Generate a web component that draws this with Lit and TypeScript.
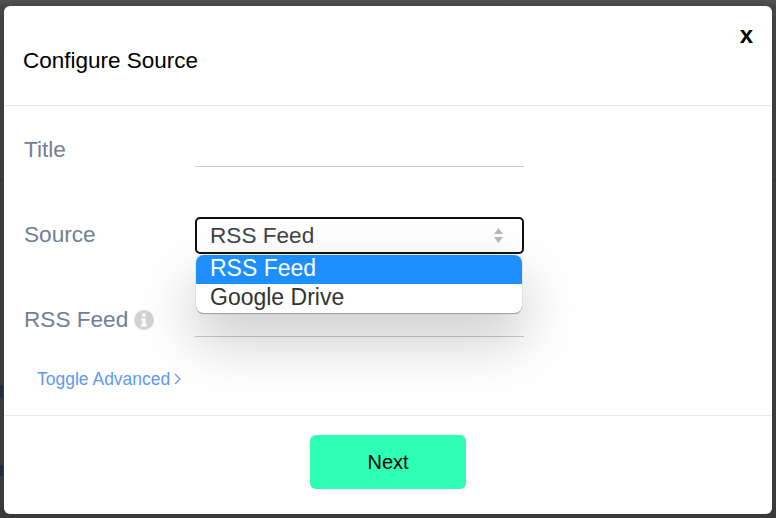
import { LitElement, html, css } from "lit";
import { customElement } from "lit/decorators.js";

@customElement("app-root")
export class AppRoot extends LitElement {
  static styles = css`
    :host {
      display: block;
      position: relative;
      width: 776px;
      height: 518px;
      overflow: hidden;
      background: linear-gradient(#505050 0, #454545 8px, #3e3e3e 60px, #3a3a3a 100%);
      font-family: "Liberation Sans", Arial, sans-serif;
      box-sizing: border-box;
      padding: 6px 4px 4px;
    }
    .smudge {
      position: absolute;
      left: 0;
      width: 3px;
      background: #232d3e;
    }
    .smudge.a {
      top: 385px;
      height: 13px;
    }
    .smudge.b {
      top: 465px;
      height: 11px;
    }
    .rule {
      position: absolute;
      left: 0;
      right: 0;
      top: 179px;
      height: 1px;
      background: #333;
    }
    .modal {
      position: relative;
      height: 508px;
      background: #fff;
      border-radius: 6px;
      display: flex;
      flex-direction: column;
      overflow: hidden;
    }
    .head {
      height: 100px;
      box-sizing: border-box;
      padding: 42px 19px 0;
      border-bottom: 1px solid #e6e6e6;
      font-size: 22.5px;
      line-height: 26px;
      color: #000;
    }
    .close {
      position: absolute;
      top: 16px;
      right: 19px;
      font-size: 24px;
      line-height: 26px;
      font-weight: 700;
      color: #000;
    }
    .body {
      height: 310px;
      box-sizing: border-box;
      border-bottom: 1px solid #e6e6e6;
      padding: 0 20px;
      display: flex;
      flex-direction: column;
    }
    .row {
      display: grid;
      grid-template-columns: 171px 329px;
      height: 85px;
    }
    .label {
      font-size: 22.6px;
      line-height: 26px;
      color: #718096;
      padding-top: 31px;
      display: flex;
      align-items: flex-start;
      gap: 6px;
    }
    .info {
      width: 20px;
      height: 20px;
      margin-top: 3px;
    }
    .line {
      height: 61px;
      box-sizing: border-box;
      border-bottom: 1px solid #ccc;
    }
    .select-wrap {
      position: relative;
      padding-top: 26px;
    }
    .select {
      height: 37px;
      box-sizing: border-box;
      border: 2px solid #101010;
      border-radius: 5px;
      background: #fff;
      display: flex;
      align-items: center;
      justify-content: space-between;
      padding: 0 19px 0 13px;
      font-size: 22.6px;
      color: #444;
    }
    .menu {
      position: absolute;
      z-index: 2;
      left: 1px;
      right: 2px;
      top: 64px;
      background: #fff;
      border-radius: 8px;
      overflow: hidden;
      border-bottom: 1px solid #a6a6a6;
      box-shadow: 0 0 1px rgba(0, 0, 0, 0.45), 0 25px 55px 3px rgba(0, 0, 0, 0.2);
    }
    .option {
      height: 29px;
      line-height: 27px;
      padding-left: 14px;
      font-size: 23px;
      color: #333;
    }
    .option.on {
      background: #1e8fff;
      color: #fff;
    }
    .toggle {
      display: flex;
      align-items: center;
      gap: 4px;
      margin: 7px 0 0 13px;
      font-size: 17.5px;
      line-height: 22px;
      color: #5f97f5;
    }
    .foot {
      flex: 1;
      display: flex;
      justify-content: center;
      padding-top: 19px;
    }
    .next {
      width: 156px;
      height: 54px;
      border-radius: 6px;
      background: #2fffb5;
      display: flex;
      align-items: center;
      justify-content: center;
      font-size: 20px;
      color: #000;
    }
  `;

  render() {
    return html`
      <div class="rule"></div>
      <div class="smudge a"></div>
      <div class="smudge b"></div>
      <div class="modal">
        <div class="head">Configure Source</div>
        <div class="close">x</div>
        <div class="body">
          <div class="row">
            <div class="label">Title</div>
            <div class="line"></div>
          </div>
          <div class="row">
            <div class="label">Source</div>
            <div class="select-wrap">
              <div class="select">
                <span>RSS Feed</span>
                <svg width="9" height="15" viewBox="0 0 9 15">
                  <path d="M4.5 0 9 6H0Z M0 9H9L4.5 15Z" fill="#b8b8b8"></path>
                </svg>
              </div>
              <div class="menu">
                <div class="option on">RSS Feed</div>
                <div class="option">Google Drive</div>
              </div>
            </div>
          </div>
          <div class="row">
            <div class="label">
              RSS Feed
              <svg class="info" viewBox="0 0 20 20">
                <circle cx="10" cy="10" r="10" fill="#d2d2d2"></circle>
                <path d="M8.2 3.4h3.4v3H8.2Z M7.2 8.2h4.4v6.2h1.4v2.2H7v-2.2h1.4v-4H7.2Z" fill="#fff"></path>
              </svg>
            </div>
            <div class="line"></div>
          </div>
          <div class="toggle">
            Toggle Advanced
            <svg width="7" height="12" viewBox="0 0 7 12">
              <path d="M1 1 6 6 1 11" fill="none" stroke="#5f97f5" stroke-width="1.3"></path>
            </svg>
          </div>
        </div>
        <div class="foot"><div class="next">Next</div></div>
      </div>
    `;
  }
}
